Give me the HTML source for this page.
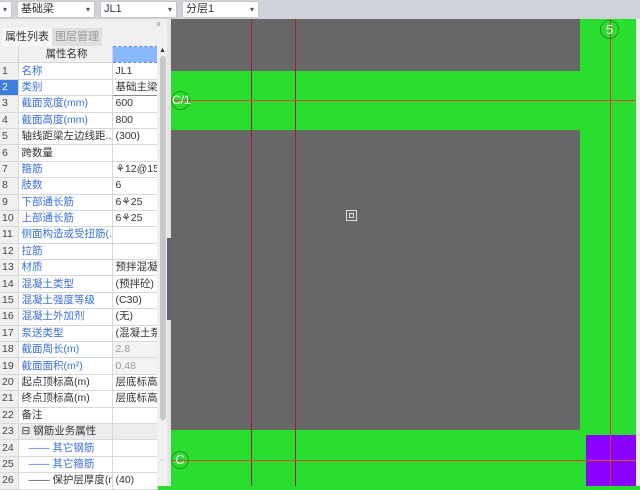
<!DOCTYPE html>
<html><head><meta charset="utf-8"><style>
*{margin:0;padding:0;box-sizing:border-box}
body{width:640px;height:486px;overflow:hidden;position:relative;background:#2ade30;font-family:"Liberation Sans","Noto Sans CJK SC",sans-serif;font-size:11px}
.a{position:absolute}
.top{left:0;top:0;width:640px;height:19px;background:#cfd2d8}
.dd{top:1px;height:17px;background:#fff;border:1px solid #c8c8c8;color:#333;padding-left:3px;line-height:15px;font-size:11px}
.dd:after{content:"▾";position:absolute;right:4px;top:0;font-size:8px;color:#555}
.panel{left:0;top:19px;width:167px;height:467px;background:#f0f0f0}
table{border-collapse:collapse;position:absolute;left:0;top:46px;width:157px;table-layout:fixed}
td{height:16.4px;border-bottom:1px solid #d8d8d8;border-right:1px solid #d8d8d8;white-space:nowrap;overflow:hidden;padding-left:3px;font-size:10.5px;line-height:15px;background:#fff;color:#333}
td.n{background:#f0f0f0;color:#444;padding-left:2px}
td.b{color:#3a6fd8}
td.g{color:#999}
</style></head><body>
<div class="a" style="left:171px;top:19px;width:409px;height:52px;background:#676767"></div>
<div class="a" style="left:171px;top:130px;width:409px;height:300px;background:#676767"></div>
<div class="a" style="left:586px;top:435px;width:50px;height:51px;background:#8800ff"></div>
<div class="a" style="left:251px;top:19px;width:1px;height:467px;background:#a02030"></div>
<div class="a" style="left:295px;top:19px;width:1px;height:467px;background:#a02030"></div>
<div class="a" style="left:610px;top:19px;width:1px;height:467px;background:#e03030"></div>
<div class="a" style="left:171px;top:100px;width:469px;height:1px;background:#e04030"></div>
<div class="a" style="left:171px;top:460px;width:469px;height:1px;background:#e04030"></div>
<div class="a" style="left:600px;top:20px;width:19px;height:19px;border:1px solid #1a9a1a;border-radius:50%;color:#fff;text-align:center;line-height:17px;font-size:13px">5</div>
<div class="a" style="left:171px;top:91px;width:19px;height:19px;border:1px solid #1a9a1a;border-radius:50%;color:#fff;line-height:17px;font-size:12px">C/1</div>
<div class="a" style="left:171px;top:451px;width:18px;height:18px;border:1px solid #1a9a1a;border-radius:50%;color:#fff;text-align:center;line-height:16px;font-size:13px">C</div>
<div class="a" style="left:346px;top:210px;width:11px;height:11px;border:1px solid #ddd;background:#666;box-shadow:inset 0 0 0 2px #666,inset 0 0 0 3px #ddd"></div>
<div class="a" style="left:636px;top:19px;width:4px;height:467px;background:#e8f0e8"></div>
<div class="a top"></div>
<div class="a dd" style="left:-4px;width:16px"></div>
<div class="a dd" style="left:17px;width:78px">基础梁</div>
<div class="a dd" style="left:100px;width:77px">JL1</div>
<div class="a dd" style="left:182px;width:77px">分层1</div>
<div class="a panel">
<div class="a" style="right:6px;top:0;font-size:9px;color:#888">×</div>
<div class="a" style="left:2px;top:9px;width:50px;height:18px;background:#f8f8f8;line-height:18px;text-align:center;color:#333">属性列表</div>
<div class="a" style="left:52px;top:9px;width:50px;height:18px;background:#e0e0e0;line-height:18px;text-align:center;color:#999">图层管理</div>
</div>
<table>
<colgroup><col style="width:18px"><col style="width:94px"><col style="width:45px"></colgroup>
<tr><td class="n"></td><td style="background:#f0f0f0;text-align:center">属性名称</td><td style="background:#8ab8ff;border:1px dashed #5a8ae0"></td></tr>
<tr><td class="n">1</td><td class="b">名称</td><td>JL1</td></tr>
<tr><td class="n" style="background:#3d7fdc;color:#fff">2</td><td class="b">类别</td><td style="border:1px solid #888">基础主梁</td></tr>
<tr><td class="n">3</td><td class="b">截面宽度(mm)</td><td>600</td></tr>
<tr><td class="n">4</td><td class="b">截面高度(mm)</td><td>800</td></tr>
<tr><td class="n">5</td><td>轴线距梁左边线距...</td><td>(300)</td></tr>
<tr><td class="n">6</td><td>跨数量</td><td></td></tr>
<tr><td class="n">7</td><td class="b">箍筋</td><td>⚘12@15</td></tr>
<tr><td class="n">8</td><td class="b">肢数</td><td>6</td></tr>
<tr><td class="n">9</td><td class="b">下部通长筋</td><td>6⚘25</td></tr>
<tr><td class="n">10</td><td class="b">上部通长筋</td><td>6⚘25</td></tr>
<tr><td class="n">11</td><td class="b">侧面构造或受扭筋(...</td><td></td></tr>
<tr><td class="n">12</td><td class="b">拉筋</td><td></td></tr>
<tr><td class="n">13</td><td class="b">材质</td><td>预拌混凝土</td></tr>
<tr><td class="n">14</td><td class="b">混凝土类型</td><td>(预拌砼)</td></tr>
<tr><td class="n">15</td><td class="b">混凝土强度等级</td><td>(C30)</td></tr>
<tr><td class="n">16</td><td class="b">混凝土外加剂</td><td>(无)</td></tr>
<tr><td class="n">17</td><td class="b">泵送类型</td><td>(混凝土泵</td></tr>
<tr><td class="n">18</td><td class="b">截面周长(m)</td><td class="g" style="background:#f4f4f4">2.8</td></tr>
<tr><td class="n">19</td><td class="b">截面面积(m²)</td><td class="g" style="background:#f4f4f4">0.48</td></tr>
<tr><td class="n">20</td><td>起点顶标高(m)</td><td>层底标高</td></tr>
<tr><td class="n">21</td><td>终点顶标高(m)</td><td>层底标高</td></tr>
<tr><td class="n">22</td><td>备注</td><td></td></tr>
<tr><td class="n">23</td><td style="background:#ececec">⊟ 钢筋业务属性</td><td style="background:#ececec"></td></tr>
<tr><td class="n">24</td><td class="b" style="padding-left:10px">—— 其它钢筋</td><td></td></tr>
<tr><td class="n">25</td><td class="b" style="padding-left:10px">—— 其它箍筋</td><td></td></tr>
<tr><td class="n">26</td><td style="padding-left:10px">—— 保护层厚度(m...</td><td>(40)</td></tr>
</table>
<div class="a" style="left:157px;top:46px;width:10px;height:440px;background:#f0f0f0"></div>
<div class="a" style="left:159px;top:47px;font-size:7px;color:#333">▲</div>
<div class="a" style="left:160px;top:56px;width:6px;height:364px;background:#c8c8c8;border-radius:3px"></div>
<div class="a" style="left:167px;top:19px;width:4px;height:467px;background:#e4e4e4"></div>
<div class="a" style="left:167px;top:238px;width:4px;height:82px;background:#5e6470"></div>
</body></html>
